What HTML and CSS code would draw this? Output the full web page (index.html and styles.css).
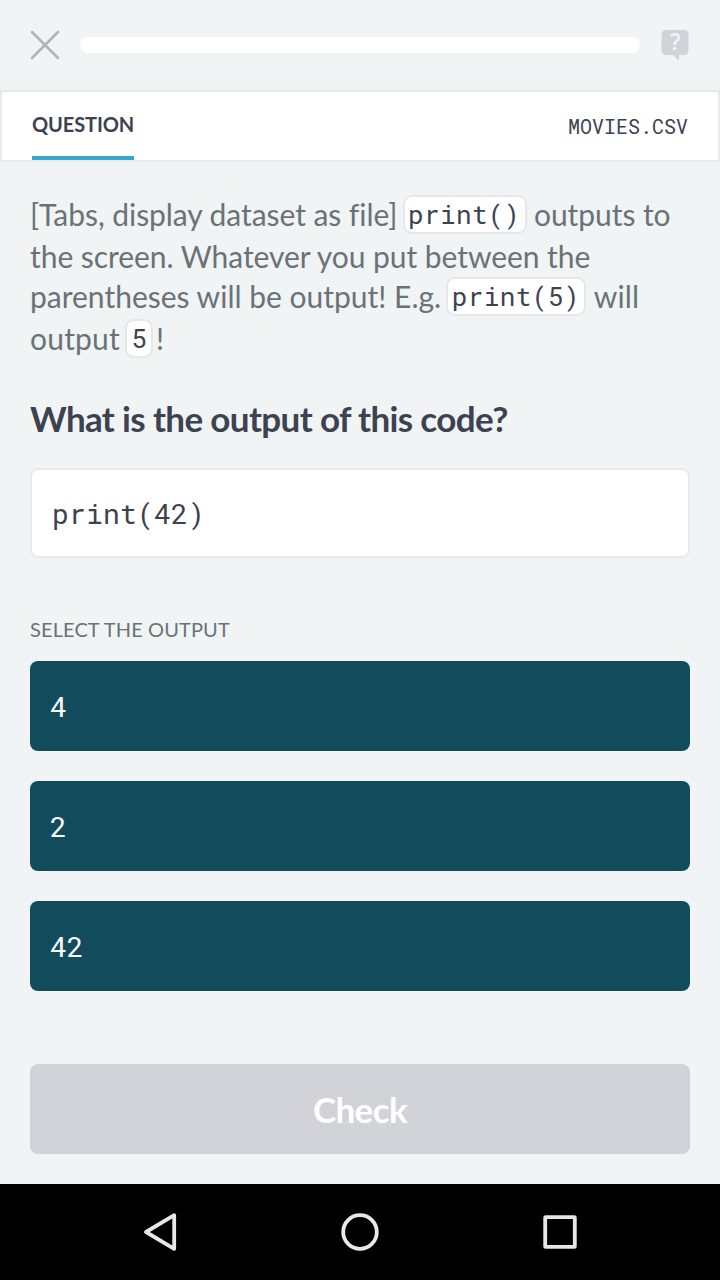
FILE: index.html
```html
<!DOCTYPE html>
<html lang="en">
<head>
<meta charset="utf-8">
<title>Question</title>
<link rel="stylesheet" href="styles.css">
</head>
<body>
<div class="app">
  <header class="topbar">
    <svg class="close" width="30" height="30" viewBox="0 0 30 30"><path d="M2 2 28 28M28 2 2 28"/></svg>
    <div class="progress"></div>
    <svg class="help" width="28" height="31" viewBox="0 0 28 31">
      <path class="help-bubble" d="M5 0H23Q27.5 0 27.5 5V20Q27.5 25 23 25H18V30.2Q14.5 28.5 12.5 25H5Q.5 25 .5 20V5Q.5 0 5 0Z"/>
      <path class="help-mark" d="M9.8 6.2Q11.2 4.4 14 4.4Q17.8 4.4 17.8 7.6Q17.8 9.5 15.6 11Q13.6 12.4 13.6 15"/>
      <circle class="help-dot" cx="13.5" cy="18.6" r="1.8"/>
    </svg>
  </header>
  <nav class="tabs">
    <div class="tab tab-active"><span class="tab-label">QUESTION</span></div>
    <div class="tab"><span class="file-label">MOVIES.CSV</span></div>
  </nav>
  <main class="content">
    <div class="intro">
      <div class="line tight"><span class="text">[Tabs, display dataset as file]</span><code class="chip chip-call">print()</code><span class="text">outputs to</span></div>
      <div class="line tight short"><span class="text">the screen. Whatever you put between the</span></div>
      <div class="line"><span class="text">parentheses will be output! E.g.</span><code class="chip chip-arg">print(5)</code><span class="text loose">will</span></div>
      <div class="line last"><span class="text loose">output</span><code class="chip chip-digit">5</code><span class="text">!</span></div>
    </div>
    <h1 class="question">What is the output of this code?</h1>
    <pre class="code">print(42)</pre>
    <h2 class="prompt">SELECT THE OUTPUT</h2>
    <div class="answers">
      <div class="answer">4</div>
      <div class="answer">2</div>
      <div class="answer">42</div>
    </div>
    <div class="check">Check</div>
  </main>
  <footer class="navbar">
    <svg class="nav-icon" width="40" height="40" viewBox="0 0 40 40"><path d="M34.2 3.2V36.8L6 20Z"/></svg>
    <svg class="nav-icon" width="40" height="40" viewBox="0 0 40 40"><circle cx="20" cy="20" r="16.8"/></svg>
    <svg class="nav-icon" width="40" height="40" viewBox="0 0 40 40"><rect x="5.2" y="5.2" width="29.6" height="29.6" rx=".6"/></svg>
  </footer>
</div>
</body>
</html>
```
FILE: styles.css
```css
* { box-sizing: border-box; }
body { margin: 0; background: #f0f4f5; font-family: Lato, sans-serif; color: #6a7278; }
.app { width: 720px; height: 1280px; display: flex; flex-direction: column; }
.topbar { height: 90px; padding: 0 31px 0 30px; display: flex; align-items: center; flex: none; }
.close { stroke: #b2b3ba; stroke-width: 2.5; stroke-linecap: round; fill: none; }
.progress { width: 560px; height: 16px; border-radius: 8px; background: #fff; margin-left: 20px; }
.help { margin-left: auto; }
.help-bubble { fill: #d1d3d8; }
.help-mark { fill: none; stroke: #f0f4f5; stroke-width: 2.6; }
.help-dot { fill: #f0f4f5; }
.tabs { height: 72px; flex: none; border: 2px solid #e6eaeb; background: #fff; display: flex; justify-content: space-between; padding: 0 30px; }
.tab { height: 68px; line-height: 64px; color: #3d4251; white-space: nowrap; }
.tab-active { width: 102px; border-bottom: 4px solid #33aacc; font-size: 20px; font-weight: 700; letter-spacing: -.1px; }
.file-label { display: block; font: 20px/68px "Roboto Mono", "DejaVu Sans Mono", monospace; }
.content { flex: 1; padding: 33px 30px 30px; display: flex; flex-direction: column; }
.intro { font-size: 30px; }
.line { display: flex; height: 41px; line-height: 39px; align-items: flex-start; white-space: nowrap; }
.line.short { padding-top: 1px; }
.line.last { padding-top: 1px; }
.tight .text { letter-spacing: -.06px; }
.loose { letter-spacing: .2px; }
.chip { height: 39px; margin-left: 5px; margin-right: 8px; border: 2px solid #e5e7eb; border-radius: 9px; background: #fff; color: #3d4251; font: 26px/34px "Roboto Mono", "DejaVu Sans Mono", monospace; text-align: center; }
.chip-call { width: 124px; margin-left: 5.5px; margin-right: 7px; text-align: left; padding-left: 3px; letter-spacing: .4px; }
.chip-arg { width: 140px; margin-right: 7.5px; text-align: left; padding-left: 3.5px; letter-spacing: .4px; }
.chip-digit { width: 28px; margin-right: 3px; padding-left: 0; line-height: 35px; }
.question { margin: 39px 0 0; height: 50px; font-size: 35px; line-height: 40px; letter-spacing: -.64px; color: #3d4251; }
.code { margin: 20px 0 0; height: 90px; border: 2px solid #e6eaeb; border-radius: 8px; background: #fff; padding: 0 20px; color: #3d4251; font: 28px/88px "Roboto Mono", "DejaVu Sans Mono", monospace; letter-spacing: .2px; }
.prompt { margin: 60px 0 0; height: 43px; font-size: 20px; font-weight: 400; line-height: 22px; letter-spacing: .12px; }
.answers { display: grid; gap: 30px; }
.answer { height: 90px; border-radius: 8px; background: #124b5c; color: #fff; padding-left: 20px; font: 28px/92px "Roboto Mono", "DejaVu Sans Mono", monospace; }
.check { margin-top: auto; height: 90px; border-radius: 8px; background: #d1d3d8; color: #fff; font-size: 35px; font-weight: 700; line-height: 90px; letter-spacing: -.6px; text-align: center; }
.navbar { height: 96px; flex: none; background: #000; padding: 0 140px; display: flex; justify-content: space-between; align-items: center; }
.nav-icon { fill: none; stroke: #e8e8e8; stroke-width: 3.8; stroke-linejoin: round; }
```
